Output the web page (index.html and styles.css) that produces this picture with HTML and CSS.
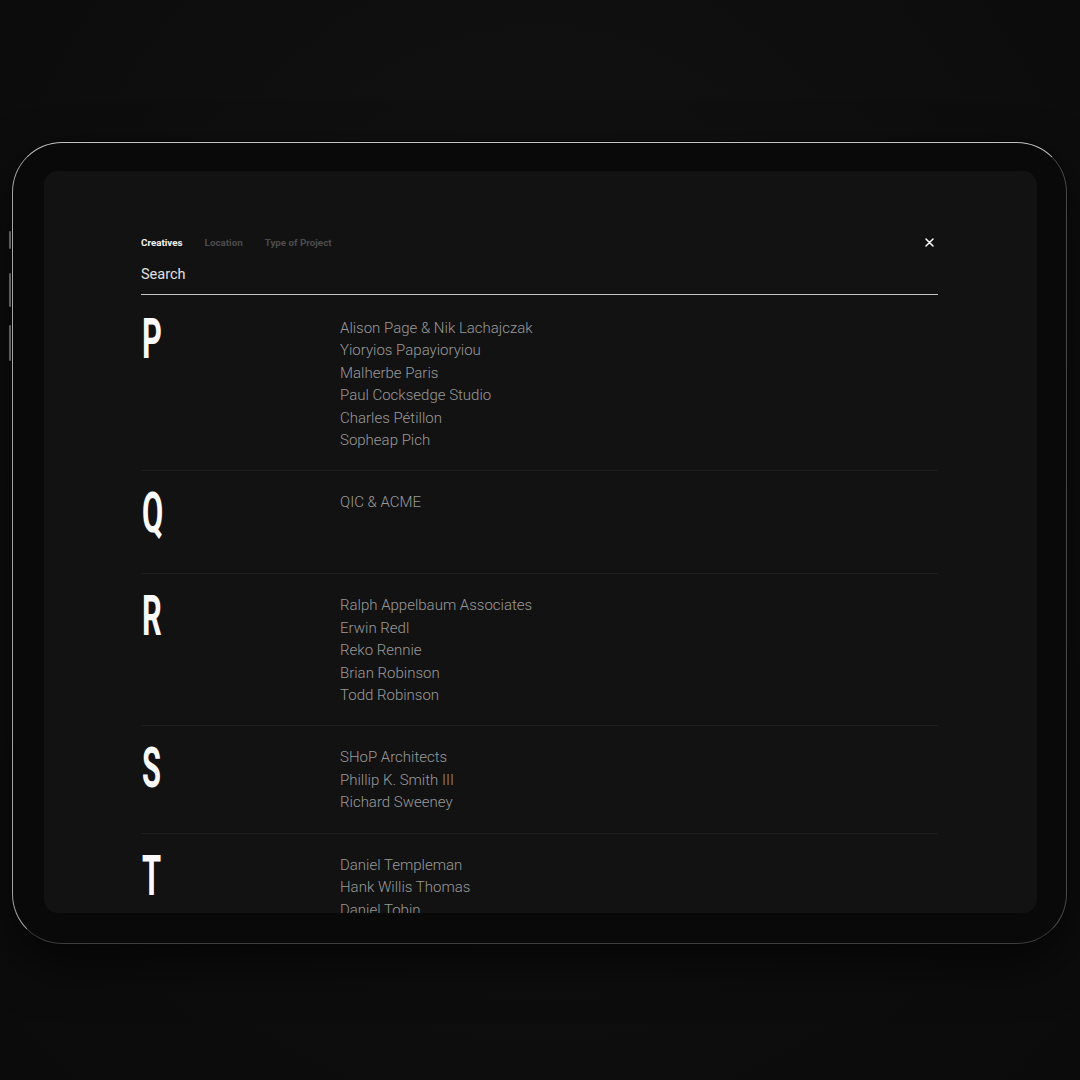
FILE: index.html
```html
<!DOCTYPE html>
<html lang="en">
<head>
    <meta charset="UTF-8">
    <meta name="viewport" content="width=device-width, initial-scale=1.0">
    <title>Creatives Index</title>
    <link rel="stylesheet" href="styles.css">
</head>
<body>
    <div class="tablet">
        <span class="side-button b1"></span>
        <span class="side-button b2"></span>
        <span class="side-button b3"></span>

        <div class="screen">
            <div class="filters">
                <span class="tab active">Creatives</span>
                <span class="tab">Location</span>
                <span class="tab">Type of Project</span>
                <button class="close" aria-label="Close">
                    <svg width="9" height="9" viewBox="0 0 9 9">
                        <path d="M1 1 L8 8 M8 1 L1 8" stroke="#fff" stroke-width="1.5" stroke-linecap="round"/>
                    </svg>
                </button>
            </div>

            <div class="search">Search</div>

            <div class="index">
                <div class="group">
                    <div class="letter"><span>P</span></div>
                    <ul class="names">
                        <li>Alison Page &amp; Nik Lachajczak</li>
                        <li>Yioryios Papayioryiou</li>
                        <li>Malherbe Paris</li>
                        <li>Paul Cocksedge Studio</li>
                        <li>Charles Pétillon</li>
                        <li>Sopheap Pich</li>
                    </ul>
                </div>
                <div class="group">
                    <div class="letter"><span>Q</span></div>
                    <ul class="names">
                        <li>QIC &amp; ACME</li>
                    </ul>
                </div>
                <div class="group">
                    <div class="letter"><span>R</span></div>
                    <ul class="names">
                        <li>Ralph Appelbaum Associates</li>
                        <li>Erwin Redl</li>
                        <li>Reko Rennie</li>
                        <li>Brian Robinson</li>
                        <li>Todd Robinson</li>
                    </ul>
                </div>
                <div class="group">
                    <div class="letter"><span>S</span></div>
                    <ul class="names">
                        <li>SHoP Architects</li>
                        <li>Phillip K. Smith III</li>
                        <li>Richard Sweeney</li>
                    </ul>
                </div>
                <div class="group">
                    <div class="letter"><span>T</span></div>
                    <ul class="names">
                        <li>Daniel Templeman</li>
                        <li>Hank Willis Thomas</li>
                        <li>Daniel Tobin</li>
                    </ul>
                </div>
            </div>
        </div>
    </div>
</body>
</html>
```

FILE: styles.css
```css
html, body {
    margin: 0;
    padding: 0;
}

body {
    width: 1080px;
    height: 1080px;
    overflow: hidden;
    background: radial-gradient(ellipse at 50% 40%, #131313 0%, #0d0d0d 70%, #0b0b0b 100%);
    font-family: Roboto, "Liberation Sans", sans-serif;
    padding: 142px 0 0 12px;
    box-sizing: border-box;
}

.tablet {
    position: relative;
    width: 1055px;
    height: 802px;
    box-sizing: border-box;
    padding: 28px 29px 30px 31px;
    border-radius: 50px;
    background: #090909;
    border: 1.5px solid #6c6c6c;
    border-top-color: #c4c4c4;
    border-left-color: #a4a4a4;
    border-right-color: #4a4a4a;
    border-bottom-color: #3c3c3c;
    box-shadow: 0 0 0 1px #050505, 0 20px 50px rgba(0, 0, 0, 0.6);
}

.side-button {
    position: absolute;
    left: -4px;
    width: 2px;
    background: #5e5e5e;
    border-radius: 1px;
}

.b1 { top: 88px; height: 18px; }
.b2 { top: 130px; height: 34px; }
.b3 { top: 182px; height: 36px; }

.screen {
    height: 100%;
    background: #121212;
    border-radius: 14px;
    overflow: hidden;
    padding: 66px 99px 0 97px;
    box-sizing: border-box;
}

.filters {
    display: flex;
    align-items: center;
    gap: 22px;
    height: 11px;
}

.tab {
    font-size: 9.8px;
    font-weight: 700;
    color: #4c4c4c;
    line-height: 11px;
}

.tab.active {
    color: #f2f2f2;
}

.close {
    margin-left: auto;
    margin-right: 4px;
    background: none;
    border: none;
    padding: 0;
    width: 9px;
    height: 9px;
    display: flex;
    cursor: pointer;
}

.search {
    margin-top: 18px;
    font-size: 14.5px;
    line-height: 17px;
    color: #e0e0e0;
    padding-bottom: 11px;
    border-bottom: 1px solid #c4c4c4;
}

.index {
    display: flex;
    flex-direction: column;
    margin-top: 2px;
}

.group {
    display: grid;
    grid-template-columns: 199px 1fr;
    padding: 20px 0 19px;
    border-bottom: 1px solid #1d1d1d;
}

.letter {
    height: 63px;
    font-size: 56px;
    font-weight: 700;
    line-height: 44px;
    color: #fafafa;
}

.letter span {
    display: inline-block;
    transform: scaleX(0.55);
    transform-origin: left;
    margin-left: 1px;
}

.names {
    list-style: none;
    margin: 0;
    padding: 0;
}

.names li {
    font-size: 15px;
    font-weight: 300;
    line-height: 22.4px;
    color: #9a9a9a;
}
```
